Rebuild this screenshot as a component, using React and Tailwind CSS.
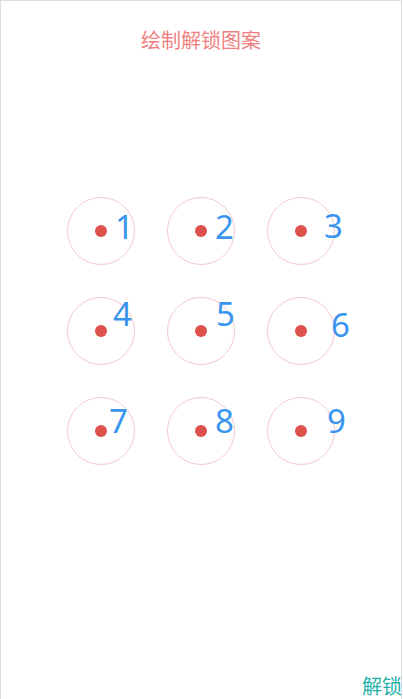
const points = [
  { n: 1, pos: 'left-[64px] top-[29px]' },
  { n: 2, pos: 'left-[64px] top-[29px]' },
  { n: 3, pos: 'left-[73px] top-[28px]' },
  { n: 4, pos: 'left-[62px] top-[16px]' },
  { n: 5, pos: 'left-[65px] top-[16px]' },
  { n: 6, pos: 'left-[80px] top-[27px]' },
  { n: 7, pos: 'left-[58px] top-[23px]' },
  { n: 8, pos: 'left-[64px] top-[23px]' },
  { n: 9, pos: 'left-[76px] top-[23px]' },
];

export default function App() {
  return (
    <div
      className="flex flex-col w-[402px] h-[701px] border-l border-t border-r border-[#dcdcdc] bg-white"
      style={{ fontFamily: "'Noto Sans', 'Noto Sans CJK SC', sans-serif" }}
    >
      <div className="pt-[26px] text-center text-[20px] leading-[28px] text-[#f08080]">绘制解锁图案</div>

      <div className="mt-[126px] ml-[50px] grid grid-cols-[repeat(3,100px)] grid-rows-[repeat(3,100px)]">
        {points.map(p => (
          <div key={p.n} className="relative flex items-center justify-center">
            <div className="w-[68px] h-[68px] rounded-full border border-[#f6c9c9] flex items-center justify-center">
              <div className="w-3 h-3 rounded-full bg-[#dd524b]" />
            </div>
            <span className={`absolute ${p.pos} text-[33px] leading-none text-[#3a95ef]`}>{p.n}</span>
          </div>
        ))}
      </div>

      <div className="flex-1" />
      <div className="self-end mr-[-1px] text-[20px] leading-[28px] text-[#1fb1a9]">解锁</div>
    </div>
  );
}
